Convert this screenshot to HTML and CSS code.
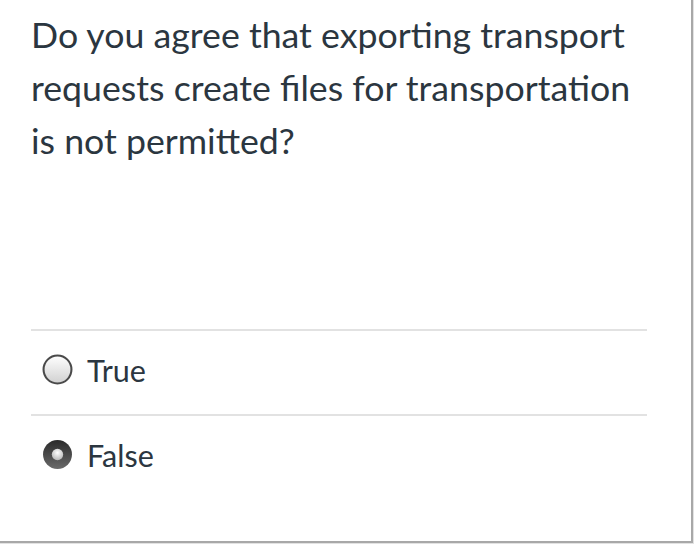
FILE: index.html
```html
<!DOCTYPE html>
<html lang="en">
<head>
<meta charset="utf-8">
<title>Question</title>
<link rel="stylesheet" href="styles.css">
</head>
<body>
<div class="card">
  <div class="question">Do you agree that exporting transport requests create files for transportation is not permitted?</div>
  <div class="answers">
    <label class="answer">
      <svg class="radio" width="31" height="31" viewBox="0 0 30 30">
        <defs>
          <linearGradient id="g1" x1="0" y1="0" x2="0" y2="1">
            <stop offset="0" stop-color="#ffffff"/>
            <stop offset="1" stop-color="#d0d0d0"/>
          </linearGradient>
        </defs>
        <circle cx="15" cy="15" r="13.5" fill="url(#g1)" stroke="#4a4a4a" stroke-width="2"/>
      </svg>
      <span class="label">True</span>
    </label>
    <label class="answer">
      <svg class="radio" width="31" height="31" viewBox="0 0 30 30">
        <defs>
          <linearGradient id="g2" x1="0" y1="0" x2="0" y2="1">
            <stop offset="0" stop-color="#2a2a2a"/>
            <stop offset="1" stop-color="#6a6a6a"/>
          </linearGradient>
          <radialGradient id="g3" cx="0.5" cy="0.35" r="0.6">
            <stop offset="0" stop-color="#ffffff"/>
            <stop offset="1" stop-color="#bdbdbd"/>
          </radialGradient>
        </defs>
        <circle cx="15" cy="15" r="14" fill="url(#g2)"/>
        <circle cx="15" cy="15" r="5.5" fill="url(#g3)"/>
      </svg>
      <span class="label">False</span>
    </label>
  </div>
</div>
</body>
</html>
```
FILE: styles.css
```css
html, body {
  margin: 0;
  padding: 0;
  background: #ffffff;
}
body {
  width: 700px;
  height: 558px;
  overflow: hidden;
  font-family: Lato, "Liberation Sans", sans-serif;
  color: #2b3640;
}
.card {
  box-sizing: border-box;
  width: 695px;
  height: 545px;
  margin-top: -2px;
  margin-left: -2px;
  border: 2px solid #a8a8a8;
  box-shadow: 1px 1px 0 #e2e2e2;
  background: #fff;
  padding: 8px 0 0 31px;
}
.question {
  font-size: 35.7px;
  line-height: 53px;
  width: 620px;
}
.answers {
  margin-top: 162px;
  width: 616px;
}
.answer {
  display: flex;
  align-items: center;
  height: 85px;
  border-top: 2px solid #e2e2e2;
  padding: 0 0 6px 11px;
  box-sizing: border-box;
}
.radio {
  flex: none;
  margin-right: 14px;
}
.label {
  font-size: 30.5px;
}
```
